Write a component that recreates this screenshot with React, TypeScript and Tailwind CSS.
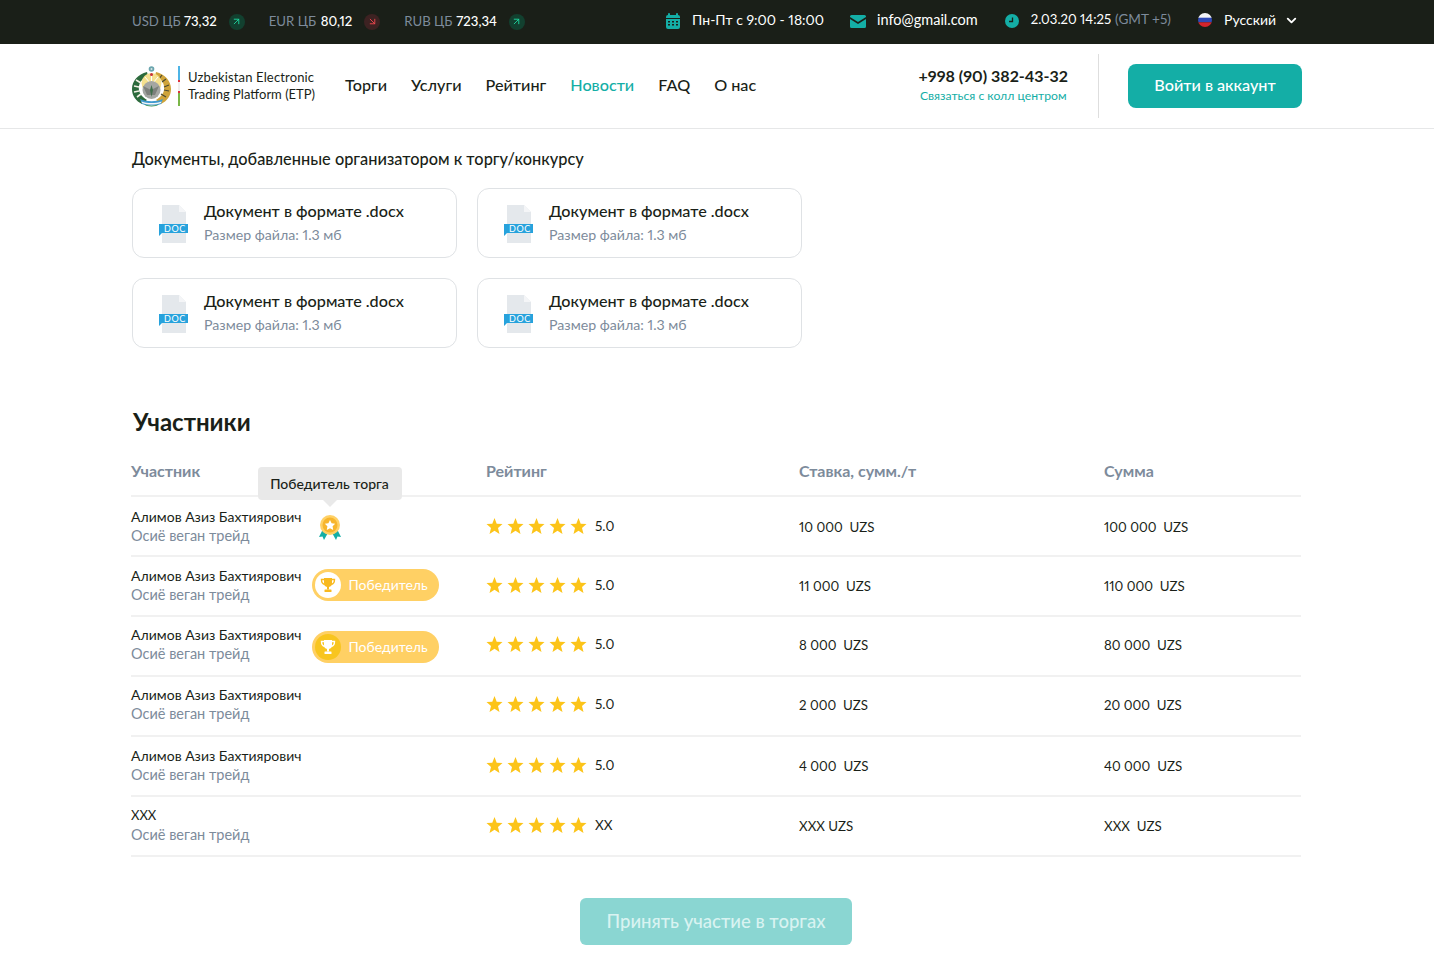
import { ChevronDown, ArrowUpRight, ArrowDownRight } from "lucide-react";

const rates = [
  { label: "USD ЦБ", value: "73,32", up: true },
  { label: "EUR ЦБ", value: "80,12", up: false },
  { label: "RUB ЦБ", value: "723,34", up: true },
];

const navItems = ["Торги", "Услуги", "Рейтинг", "Новости", "FAQ", "О нас"];

const rows = [
  { name: "Алимов Азиз Бахтиярович", rating: "5.0", bid: "10 000  UZS", sum: "100 000  UZS", badge: "medal", shift: "pb-[0px]" },
  { name: "Алимов Азиз Бахтиярович", rating: "5.0", bid: "11 000  UZS", sum: "110 000  UZS", badge: "light", shift: "pb-[2px]" },
  { name: "Алимов Азиз Бахтиярович", rating: "5.0", bid: "8 000  UZS", sum: "80 000  UZS", badge: "dark", shift: "pb-[4px]" },
  { name: "Алимов Азиз Бахтиярович", rating: "5.0", bid: "2 000  UZS", sum: "20 000  UZS", badge: "", shift: "pb-[4px]" },
  { name: "Алимов Азиз Бахтиярович", rating: "5.0", bid: "4 000  UZS", sum: "40 000  UZS", badge: "", shift: "pb-[2px]" },
  { name: "XXX", rating: "XX", bid: "XXX UZS", sum: "XXX  UZS", badge: "", shift: "pb-[2px]" },
];

const CalendarIcon = () => (
  <svg width="16" height="16" viewBox="0 0 16 16" fill="#14aea6">
    <rect x="3" y="0" width="2" height="3" rx="1" />
    <rect x="11" y="0" width="2" height="3" rx="1" />
    <path d="M1 4a2 2 0 0 1 2-2h10a2 2 0 0 1 2 2v1H1z" />
    <path fillRule="evenodd" d="M1 6h14v8a2 2 0 0 1-2 2H3a2 2 0 0 1-2-2zm2 2v1.500h2V8zm4 0v1.500h2V8zm4 0v1.500h2V8zm-8 3v1.500h2V11zm4 0v1.500h2V11zm4 0v1.500h2V11z" />
  </svg>
);

const MailIcon = () => (
  <svg width="16" height="13" viewBox="0 0 16 13" fill="#14aea6">
    <path d="M1.500 0h13A1.500 1.500 0 0 1 16 1.500v.6L8 7 0 2.100v-.6A1.500 1.500 0 0 1 1.500 0z" />
    <path d="M0 4l8 5 8-5v7.500a1.500 1.500 0 0 1-1.500 1.500h-13A1.500 1.500 0 0 1 0 11.500z" />
  </svg>
);

const ClockIcon = () => (
  <svg width="14" height="14" viewBox="0 0 14 14">
    <circle cx="7" cy="7" r="7" fill="#14aea6" />
    <path d="M7.500 3.500v4h-3.500" fill="none" stroke="#1a1f18" strokeWidth="1.300" />
  </svg>
);

const FlagIcon = () => (
  <svg width="14" height="14" viewBox="0 0 14 14">
    <clipPath id="flag">
      <circle cx="7" cy="7" r="7" />
    </clipPath>
    <g clipPath="url(#flag)">
      <rect width="14" height="5" fill="#f3f3f5" />
      <rect y="4.700" width="14" height="4.600" fill="#2f49b5" />
      <rect y="9.300" width="14" height="4.700" fill="#d3242c" />
    </g>
  </svg>
);

// state emblem, rough: wreath, sun, bird and ribbon
const Emblem = () => (
  <svg width="39" height="41" viewBox="0 0 39 41">
    <path d="M15 6C6 8 0 15 0 23c0 7 4 12 10 15l5-4C9 30 6 26 7 20c1-5 4-8 9-10z" fill="#2c6a3c" />
    <path d="M4 14l5 3M2 20l5 1M2 26l5-1M5 31l4-3" stroke="#f2f0e4" strokeWidth="1.600" />
    <path d="M24 6c9 2 15 9 15 17 0 7-4 12-10 15l-5-4c6-4 9-8 8-14-1-5-4-8-9-10z" fill="#cfa43a" />
    <path d="M30 9l-3 4M34 13l-4 3M37 19l-5 2M37 25l-5-1M34 31l-5-3" stroke="#4a4a32" strokeWidth="1.200" />
    <circle cx="19.500" cy="17" r="10" fill="#f4e08e" />
    <path d="M19.500 8v8M13 11l5 6M26 11l-5 6" stroke="#ffffff" strokeWidth="1" />
    <circle cx="19.500" cy="24" r="9" fill="#a4a6a2" />
    <path d="M11 20l8 4 8-4-4 9h-8z" fill="#7d807c" />
    <path d="M19.500 19l1.500 5-1.500 7-1.500-7z" fill="#3f6f4c" />
    <path d="M8 33c7 3 16 3 23 0l-2 5c-6 2-13 2-19 0z" fill="#3f9ad0" />
    <path d="M9.500 35.500c6 2 14 2 20 0l-.5 1.500c-6 2-13 2-19 0z" fill="#f4f4f4" />
    <path d="M12 38.500c5 1.500 10 1.500 15 0-3 2.500-12 2.500-15 0z" fill="#3a8f4b" />
    <circle cx="19.500" cy="3" r="2.800" fill="#6aa5ae" />
    <circle cx="19.500" cy="3" r="1" fill="#d8e4e2" />
    <circle cx="19.500" cy="8.500" r="1.500" fill="#c9323a" />
  </svg>
);

const DocIcon = () => (
  <div className="relative mt-[2px] h-[38px] w-[30px]">
    <svg width="30" height="38" viewBox="0 0 30 38">
      <path d="M3 0h17l7 7v31H3z" fill="#e4e8ec" />
      <path d="M20 0l7 7h-7z" fill="#f4f5f7" />
      <path d="M0 19h29v9H3l-3 3z" fill="#27a2dc" />
    </svg>
    <span className="absolute left-[1px] top-[18px] w-[30px] text-center text-[9px] leading-[11px] tracking-[0.6px] text-white">DOC</span>
  </div>
);

const DocCard = () => (
  <div className="flex h-[70px] w-[325px] items-center rounded-[12px] border border-[#dfe2e5] pl-[26px]">
    <DocIcon />
    <div className="ml-[15px] flex flex-col pb-[2px]">
      <span className="text-[16.200px] leading-[24px] font-medium text-[#1a1f18]">Документ в формате .docx</span>
      <span className="mt-[2px] text-[14.200px] leading-[20px] text-[#7d8b9b]">Размер файла: 1.3 мб</span>
    </div>
  </div>
);

const StarIcon = () => (
  <svg width="17" height="16" viewBox="0 0 17 16" fill="#fcc419">
    <path d="M8.500 0l2.200 5.700 5.800.4-4.500 3.800 1.500 6.100-5-3.300-5 3.300 1.500-6.100L.5 6.100l5.800-.4z" />
  </svg>
);

const TrophyIcon = ({ color }: { color: string }) => (
  <svg width="16" height="16" viewBox="0 0 16 16">
    <path d="M4 1h8v5a4 4 0 0 1-8 0z" fill={color} />
    <path d="M4 2.500H1.500c0 3 1 4.500 3.300 5M12 2.500h2.500c0 3-1 4.500-3.300 5" fill="none" stroke={color} strokeWidth="1.400" />
    <rect x="7" y="9" width="2" height="3.500" fill={color} />
    <rect x="4.500" y="12.500" width="7" height="2.500" rx="0.500" fill={color} />
  </svg>
);

const Medal = () => (
  <div className="relative ml-[17px] mt-[4px]">
    <div className="absolute bottom-[41px] left-[-60px] z-10 flex h-[33px] w-[144px] items-center justify-center rounded-[4px] bg-[#e9e9e9] pb-[1px] pr-[2px] text-[14px] font-medium text-[#1a1f18]">
      Победитель торга
      <div className="absolute bottom-[-7px] left-[64px] h-0 w-0 border-x-[8px] border-t-[8px] border-x-transparent border-t-[#e9e9e9]" />
    </div>
    <svg width="24" height="26" viewBox="0 0 24 26">
      <path d="M5 14L1 22l3.500-.5L6 25l5-9z" fill="#14aea6" />
      <path d="M19 14l4 8-3.500-.5L18 25l-5-9z" fill="#14aea6" />
      <circle cx="12" cy="10" r="10" fill="#ffd166" />
      <circle cx="12" cy="10" r="7.500" fill="#f7b52c" />
      <path d="M12 5l1.600 3.300 3.600.5-2.600 2.500.6 3.600-3.200-1.700-3.200 1.700.6-3.600-2.600-2.500 3.600-.5z" fill="#fff" />
    </svg>
  </div>
);

const WinnerBadge = ({ dark }: { dark: boolean }) => (
  <div className={dark ? "ml-[11px] mt-[6px] flex h-[32px] w-[127px] items-center rounded-full bg-[#ffd064] pl-[3px]" : "ml-[11px] flex h-[32px] w-[127px] items-center rounded-full bg-[#ffd064] pl-[3px]"}>
    <span className={dark ? "flex h-[26px] w-[26px] items-center justify-center rounded-full bg-[#f8c51f]" : "flex h-[26px] w-[26px] items-center justify-center rounded-full bg-white"}>
      <TrophyIcon color={dark ? "#ffffff" : "#f8b91f"} />
    </span>
    <span className="ml-[7px] pb-[2px] text-[14px] text-white">Победитель</span>
  </div>
);

export default function App() {
  return (
    <div className="min-h-[967px] bg-white font-['Lato','Noto_Sans',sans-serif] text-[#1a1f18] [font-variant-numeric:proportional-nums]">
      <header className="flex h-[44px] items-center justify-between bg-[#1a1f18] pl-[132px] pr-[135px] text-[14px]">
        <div className="flex items-center">
          {rates.map((r) => (
            <div key={r.label} className="mr-[24px] flex items-center">
              <span className="w-[52px] text-[13.200px] text-[#7d8b9b]">{r.label}</span>
              <span className="text-[13.200px] font-medium text-white">{r.value}</span>
              <span className={r.up ? "ml-[12px] flex h-[16px] w-[16px] items-center justify-center rounded-full bg-[#12402f]" : "ml-[12px] flex h-[16px] w-[16px] items-center justify-center rounded-full bg-[#3d2222]"}>
                {r.up ? <ArrowUpRight size={11} color="#1fd6a0" /> : <ArrowDownRight size={11} color="#f0484f" />}
              </span>
            </div>
          ))}
        </div>
        <div className="flex items-center pb-[2px] text-white">
          <CalendarIcon />
          <span className="ml-[11px] pb-[4px]">Пн-Пт с 9:00 - 18:00</span>
          <span className="ml-[26px]"><MailIcon /></span>
          <span className="ml-[11px] pb-[3px] text-[14.500px]">info@gmail.com</span>
          <span className="ml-[27px]"><ClockIcon /></span>
          <span className="ml-[12px] pb-[2px] text-[13.200px]">2.03.20 14:25</span>
          <span className="ml-[4px] pb-[3px] text-[13.600px] text-[#7d8b9b]">(GMT +5)</span>
          <span className="ml-[27px] pb-[2px]"><FlagIcon /></span>
          <span className="ml-[12px] pb-[4px]">Русский</span>
          <ChevronDown size={15} strokeWidth={3} className="ml-[8px] mb-[2px]" />
        </div>
      </header>

      <nav className="flex h-[85px] items-center border-b border-[#e6e7e8] pl-[132px] pr-[132px]">
        <Emblem />
        <div className="ml-[7px] h-[40px] w-[2px] bg-[linear-gradient(#4db4e6_0_35%,#e0323c_35%_40%,#eeeeee_40%_63%,#e0323c_63%_68%,#7ab648_68%)]" />
        <div className="ml-[8px] text-[13px] leading-[17px] text-[#1a1f18]">
          <div className="tracking-[0.15px]">Uzbekistan Electronic</div>
          <div>Trading Platform (ETP)</div>
        </div>
        <div className="ml-[30px] flex items-center gap-[24px] pb-[2px] text-[16.200px] font-medium">
          {navItems.map((item) => (
            <a key={item} className={item === "Новости" ? "text-[#14aea6]" : "text-[#1a1f18]"}>{item}</a>
          ))}
        </div>
        <div className="ml-auto flex flex-col items-center pb-[2px]">
          <span className="text-[16px] leading-[20px] font-bold">+998 (90) 382-43-32</span>
          <span className="mt-[2px] text-[12.200px] leading-[16px] text-[#14aea6]">Связаться с колл центром</span>
        </div>
        <div className="ml-[30px] h-[64px] w-px bg-[#dedede]" />
        <button className="ml-[29px] h-[44px] w-[174px] rounded-[8px] bg-[#14aea6] pb-[2px] text-[16.200px] font-medium text-white">Войти в аккаунт</button>
      </nav>

      <main className="px-[132px]">
        <h3 className="pt-[19px] text-[16.350px] leading-[22px] font-medium">Документы, добавленные организатором к торгу/конкурсу</h3>
        <div className="mt-[18px] grid w-[670px] grid-cols-2 gap-x-[20px] gap-y-[20px]">
          <DocCard />
          <DocCard />
          <DocCard />
          <DocCard />
        </div>

        <h2 className="ml-px mt-[57px] text-[24px] leading-[34px] font-bold">Участники</h2>

        <div className="-ml-px mt-[18px] w-[1170px]">
          <div className="grid h-[40px] grid-cols-[355px_313px_305px_1fr] items-center border-b-2 border-[#f1f1f1] pb-[11px] text-[16px] font-bold text-[#7d8b9b]">
            <span>Участник</span>
            <span>Рейтинг</span>
            <span>Ставка, сумм./т</span>
            <span>Сумма</span>
          </div>
          {rows.map((row, i) => (
            <div key={i} className={`grid h-[60px] grid-cols-[355px_313px_305px_1fr] items-center border-b-2 border-[#f1f1f1] text-[14px] ${row.shift}`}>
              <div className="flex items-center">
                <div className="flex flex-col">
                  <span className={row.name === "XXX" ? "text-[13px] leading-[19px]" : "leading-[19px]"}>{row.name}</span>
                  <span className="text-[14.500px] leading-[19px] text-[#7d8b9b]">Осиё веган трейд</span>
                </div>
                {row.badge === "medal" && <Medal />}
                {row.badge === "light" && <WinnerBadge dark={false} />}
                {row.badge === "dark" && <WinnerBadge dark />}
              </div>
              <div className="mb-[2px] flex items-center">
                <div className="mt-[1px] flex gap-[4px]">
                  {[0, 1, 2, 3, 4].map((s) => (
                    <StarIcon key={s} />
                  ))}
                </div>
                <span className="ml-[8px] pt-[2px] text-[13.500px]">{row.rating}</span>
              </div>
              <span className="mt-[4px] whitespace-pre text-[13.300px]">{row.bid}</span>
              <span className="mt-[4px] whitespace-pre text-[13.300px]">{row.sum}</span>
            </div>
          ))}
        </div>

        <div className="mt-[41px] flex justify-center pr-[2px]">
          <button className="h-[47px] w-[272px] rounded-[6px] bg-[#8ad6d2] pt-[1px] text-[18.500px] font-medium text-[#d9f3f1]">Принять участие в торгах</button>
        </div>
      </main>
    </div>
  );
}
